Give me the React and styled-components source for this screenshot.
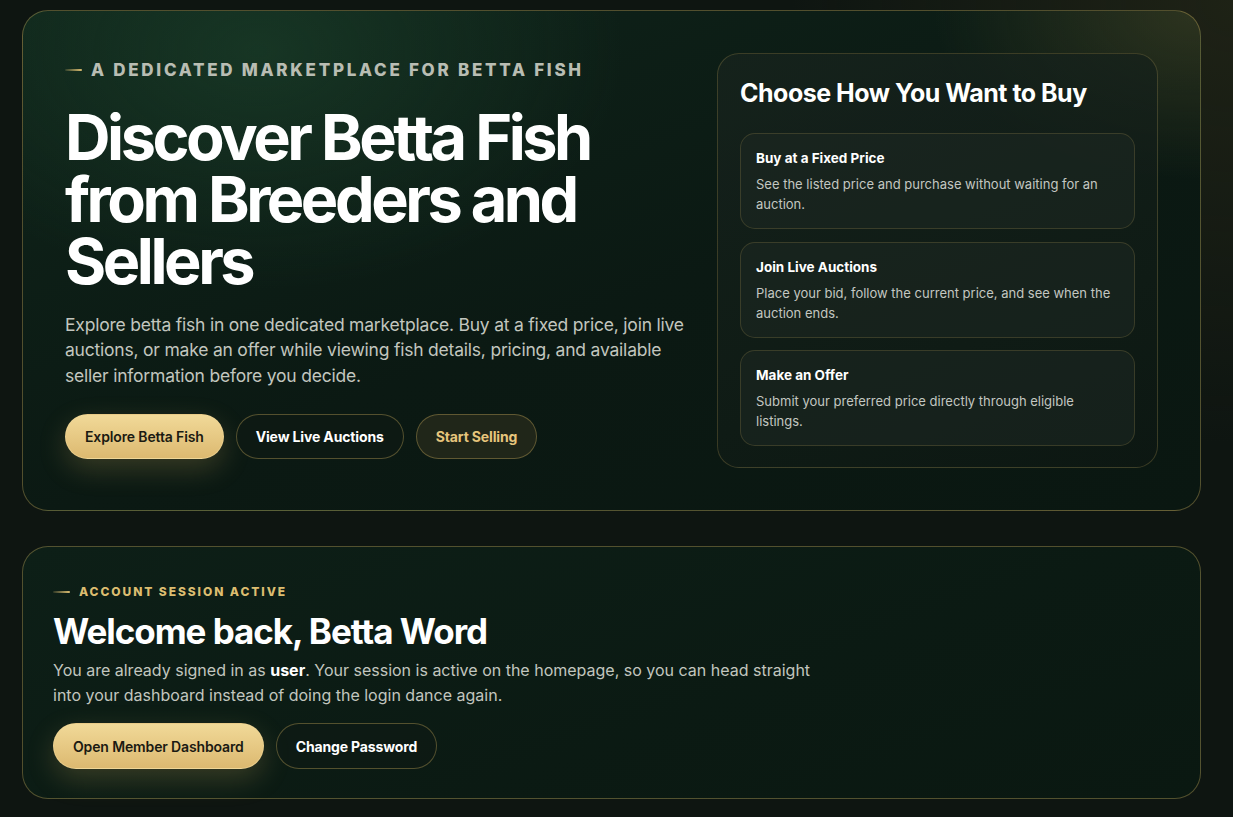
import React from "react";
import styled, { createGlobalStyle } from "styled-components";

const Global = createGlobalStyle`
  * { box-sizing: border-box; }
  html, body { margin: 0; padding: 0; }
  body {
    background: #0e1511;
    font-family: Inter, "Noto Sans", sans-serif;
    color: #f4f4f0;
    -webkit-font-smoothing: antialiased;
  }
`;

const Page = styled.main`
  min-height: 817px;
  padding: 10px 32px 18px 22px;
  display: flex;
  flex-direction: column;
  gap: 35px;
  background:
    radial-gradient(circle at 100% 0%, rgba(60, 58, 30, 0.35), transparent 30%),
    #0e1511;
`;

const Card = styled.section`
  border: 1px solid rgba(201, 170, 92, 0.38);
  border-radius: 26px;
  background:
    radial-gradient(ellipse 520px 340px at 20% 8%, rgba(30, 70, 46, 0.55), transparent 70%),
    radial-gradient(ellipse 380px 240px at 100% 0%, rgba(86, 82, 44, 0.45), transparent 70%),
    linear-gradient(160deg, #0f241a 0%, #0b1913 55%, #0a1711 100%);
`;

const Hero = styled(Card)`
  padding: 42px;
  display: grid;
  grid-template-columns: 1fr 441px;
  gap: 30px;
  align-items: center;
`;

const Session = styled(Card)`
  padding: 38px 30px 29px;
  background: linear-gradient(160deg, #0d1f17 0%, #0b1a13 60%, #0a1811 100%);
`;

const Eyebrow = styled.div`
  display: flex;
  align-items: center;
  gap: 9px;
  font-weight: 800;
  text-transform: uppercase;
  font-size: ${(p) => (p.$small ? "12px" : "17px")};
  letter-spacing: 0.16em;
  line-height: ${(p) => (p.$small ? 1.2 : 1)};
  color: ${(p) => (p.$gold ? "#dcbd70" : "#b9bdb3")};
  &::before {
    content: "";
    flex: none;
    width: 17px;
    height: 2px;
    border-radius: 2px;
    background: linear-gradient(90deg, rgba(220, 189, 112, 0.15), #dcbd70);
  }
`;

const HeroTitle = styled.h1`
  margin: 27px 0 0;
  font-size: 63px;
  line-height: 62px;
  font-weight: 700;
  letter-spacing: -0.055em;
  color: #ffffff;
`;

const Lead = styled.p`
  margin: 20px 0 0;
  font-size: 17.5px;
  line-height: 25.5px;
  letter-spacing: -0.012em;
  color: #c2c6bf;
  strong { color: #ffffff; font-weight: 700; }
`;

const SessionText = styled(Lead)`
  margin-top: 6px;
  max-width: 770px;
  font-size: 16px;
  line-height: 25px;
  letter-spacing: 0;
`;

const Actions = styled.div`
  display: flex;
  gap: 12px;
  margin-top: ${(p) => p.$top || "26px"};
`;

const Button = styled.a`
  display: inline-flex;
  align-items: center;
  justify-content: center;
  height: ${(p) => p.$h || "45px"};
  padding: 0 19px;
  border-radius: 999px;
  font-size: 14px;
  font-weight: 700;
  letter-spacing: -0.01em;
  text-decoration: none;
  cursor: pointer;
  ${(p) =>
    p.$variant === "gold"
      ? `
    color: #1b1a12;
    font-weight: 600;
    background: linear-gradient(180deg, #f1d998 0%, #dcb970 100%);
    border: 1px solid rgba(240, 214, 150, 0.6);
    box-shadow: 0 10px 28px rgba(214, 178, 96, 0.22);
  `
      : p.$variant === "tint"
      ? `
    color: #e6c57c;
    background: rgba(42, 44, 28, 0.7);
    border: 1px solid rgba(201, 170, 92, 0.38);
  `
      : `
    color: #ffffff;
    background: rgba(14, 26, 20, 0.7);
    border: 1px solid rgba(201, 170, 92, 0.38);
  `}
`;

const Panel = styled.aside`
  border: 1px solid rgba(201, 170, 92, 0.24);
  border-radius: 22px;
  padding: 23px 22px 21px;
  background: linear-gradient(160deg, rgba(24, 36, 30, 0.75), rgba(14, 24, 19, 0.75));
`;

const PanelTitle = styled.h2`
  margin: 0 0 24px;
  font-size: 25px;
  font-weight: 700;
  letter-spacing: -0.02em;
  color: #ffffff;
  line-height: 32px;
`;

const Options = styled.div`
  display: flex;
  flex-direction: column;
  gap: 12.5px;
`;

const Option = styled.div`
  border: 1px solid rgba(201, 170, 92, 0.2);
  border-radius: 15px;
  padding: 15px 15px 14px;
  background: rgba(30, 40, 35, 0.55);
`;

const OptionTitle = styled.h3`
  margin: 0 0 7px;
  font-size: 13.5px;
  font-weight: 700;
  color: #ffffff;
  line-height: 18px;
`;

const OptionText = styled.p`
  margin: 0;
  font-size: 13px;
  line-height: 20px;
  color: #c3c7c1;
`;

const WelcomeTitle = styled.h2`
  margin: 11px 0 0;
  font-size: 35px;
  line-height: 42px;
  font-weight: 700;
  letter-spacing: -0.03em;
  color: #ffffff;
`;

const buyOptions = [
  {
    title: "Buy at a Fixed Price",
    text: "See the listed price and purchase without waiting for an auction.",
  },
  {
    title: "Join Live Auctions",
    text: "Place your bid, follow the current price, and see when the auction ends.",
  },
  {
    title: "Make an Offer",
    text: "Submit your preferred price directly through eligible listings.",
  },
];

export default function App() {
  return (
    <>
      <Global />
      <Page>
        <Hero>
          <div>
            <Eyebrow>A Dedicated Marketplace for Betta Fish</Eyebrow>
            <HeroTitle>
              Discover Betta Fish from Breeders and Sellers
            </HeroTitle>
            <Lead>
              Explore betta fish in one dedicated marketplace. Buy at a fixed
              price, join live auctions, or make an offer while viewing fish
              details, pricing, and available seller information before you
              decide.
            </Lead>
            <Actions>
              <Button $variant="gold">Explore Betta Fish</Button>
              <Button>View Live Auctions</Button>
              <Button $variant="tint">Start Selling</Button>
            </Actions>
          </div>
          <Panel>
            <PanelTitle>Choose How You Want to Buy</PanelTitle>
            <Options>
              {buyOptions.map((o) => (
                <Option key={o.title}>
                  <OptionTitle>{o.title}</OptionTitle>
                  <OptionText>{o.text}</OptionText>
                </Option>
              ))}
            </Options>
          </Panel>
        </Hero>

        <Session>
          <Eyebrow $small $gold>Account Session Active</Eyebrow>
          <WelcomeTitle>Welcome back, Betta Word</WelcomeTitle>
          <SessionText>
            You are already signed in as <strong>user</strong>. Your session is
            active on the homepage, so you can head straight into your dashboard
            instead of doing the login dance again.
          </SessionText>
          <Actions $top="15px">
            <Button $variant="gold" $h="46px">Open Member Dashboard</Button>
            <Button $h="46px">Change Password</Button>
          </Actions>
        </Session>
      </Page>
    </>
  );
}
